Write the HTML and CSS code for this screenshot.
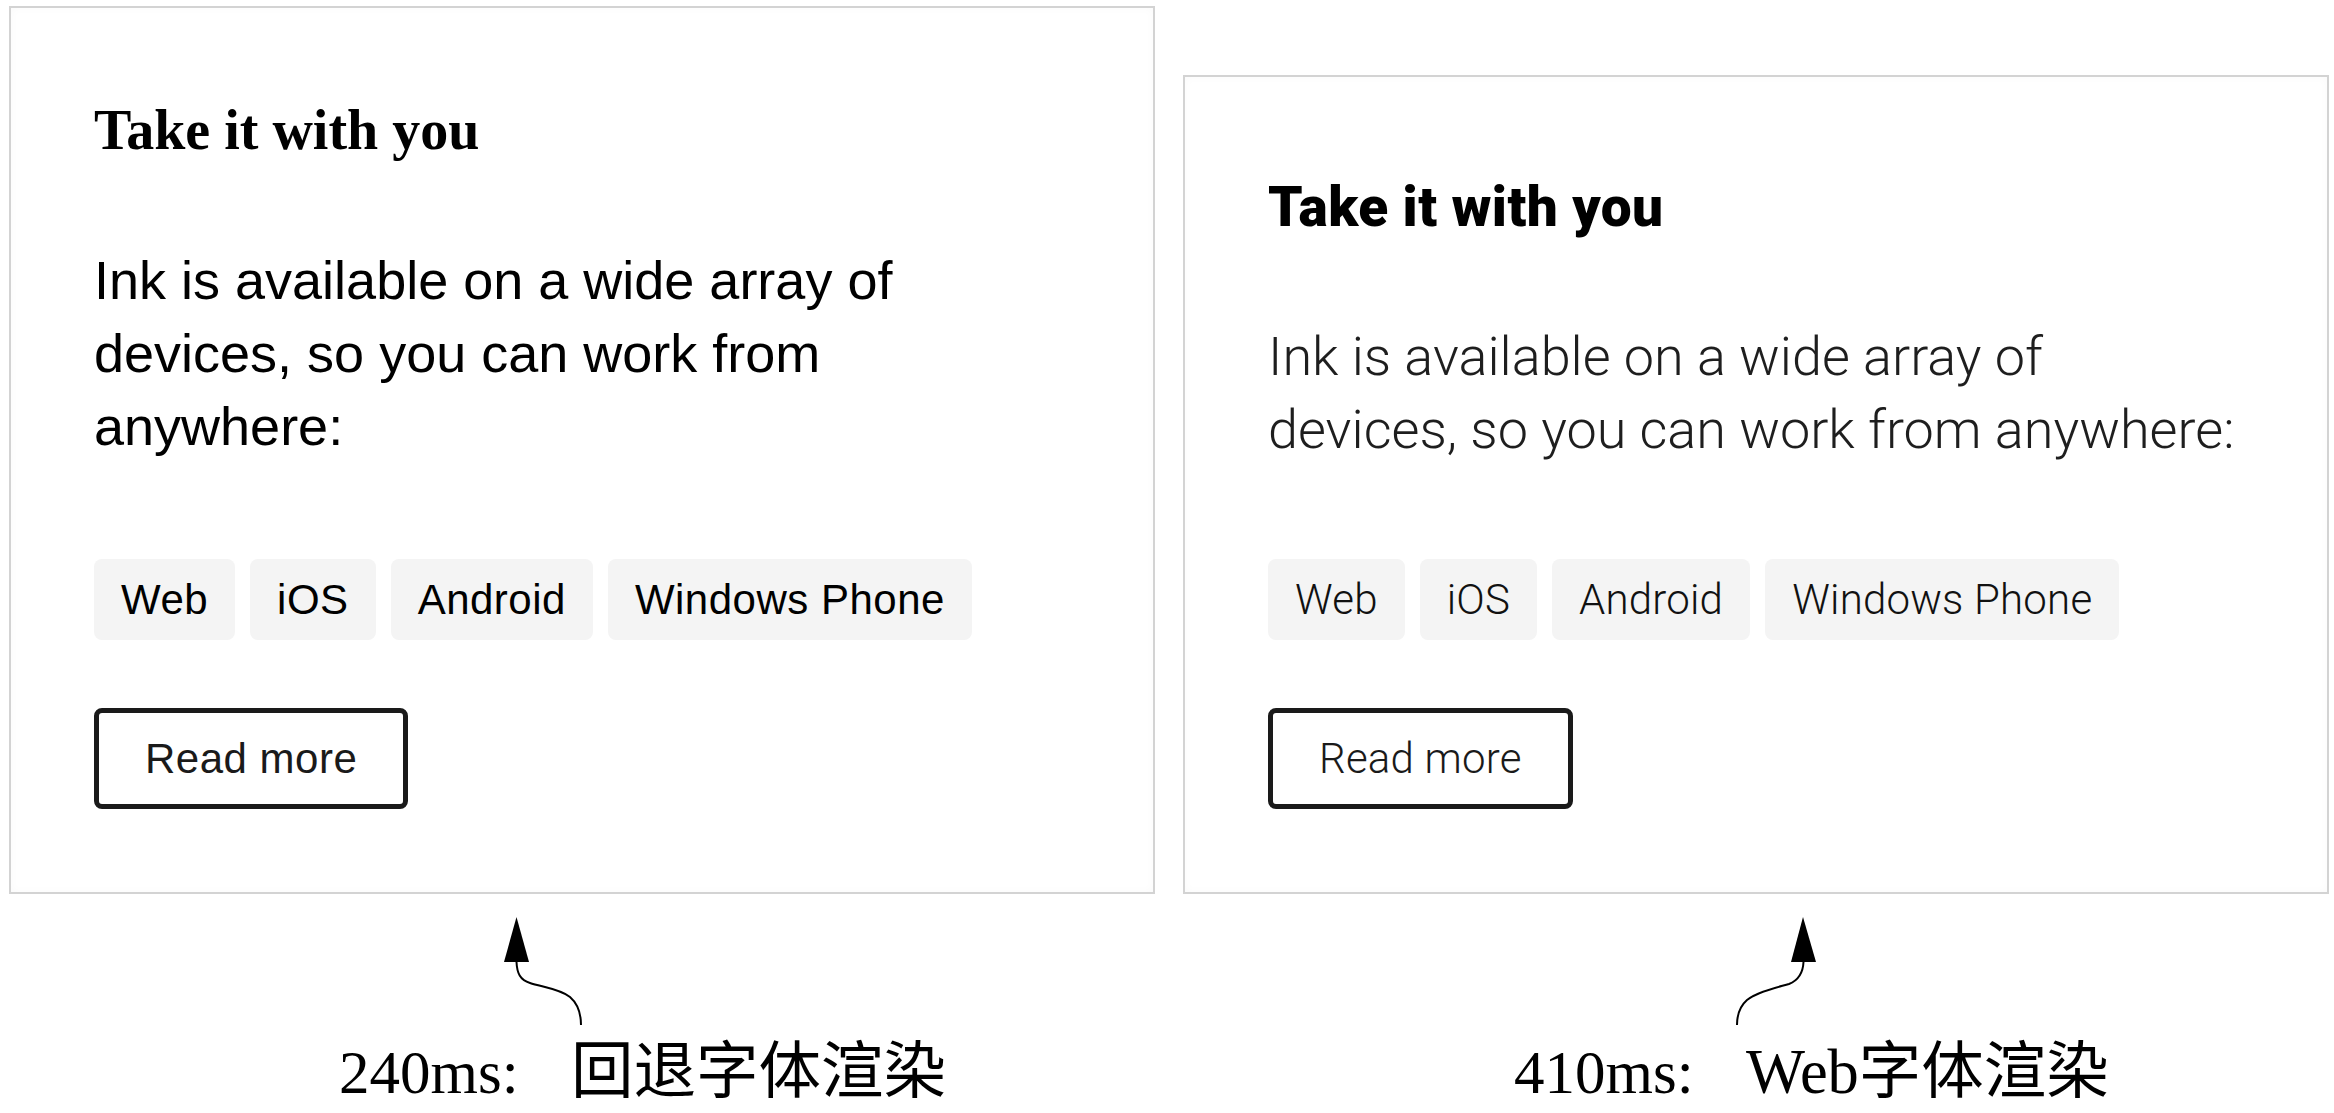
FILE: index.html
```html
<!DOCTYPE html>
<html lang="zh-CN">
<head>
<meta charset="utf-8">
<title>回退字体与Web字体渲染对比</title>
<link rel="stylesheet" href="styles.css">
</head>
<body>
<main class="figure">
  <div class="cards">
    <section class="card card--fallback">
      <h2 class="card-title">Take it with you</h2>
      <p class="card-text">Ink is available on a wide array of devices, so you can work from anywhere:</p>
      <ul class="tags">
        <li class="tag">Web</li>
        <li class="tag">iOS</li>
        <li class="tag">Android</li>
        <li class="tag">Windows Phone</li>
      </ul>
      <button class="btn" type="button">Read more</button>
    </section>
    <section class="card card--web">
      <h2 class="card-title">Take it with you</h2>
      <p class="card-text">Ink is available on a wide array of devices, so you can work from anywhere:</p>
      <ul class="tags">
        <li class="tag">Web</li>
        <li class="tag">iOS</li>
        <li class="tag">Android</li>
        <li class="tag">Windows Phone</li>
      </ul>
      <button class="btn" type="button">Read more</button>
    </section>
  </div>
  <div class="notes">
    <div class="note note--fallback">
      <svg class="arrow" width="100" height="120" viewBox="0 0 100 120" aria-hidden="true">
        <polygon points="16.5,7 4,52 29,52" fill="#000"/>
        <path d="M16.5 52 C17 63 20 70 30 73 C42 77 60 79 70 87 C78 94 81 104 81 115" fill="none" stroke="#000" stroke-width="2"/>
      </svg>
      <p class="note-label">240ms: <span class="note-zh">回退字体渲染</span></p>
    </div>
    <div class="note note--web">
      <svg class="arrow" width="100" height="120" viewBox="0 0 100 120" aria-hidden="true">
        <polygon points="78,7 66,52 91,52" fill="#000"/>
        <path d="M78.5 52 C78 63 74 70 64 74 C50 78 32 82 22 90 C14 97 12 105 12 115" fill="none" stroke="#000" stroke-width="2"/>
      </svg>
      <p class="note-label">410ms: <span class="note-zh">Web字体渲染</span></p>
    </div>
  </div>
</main>
</body>
</html>
```

FILE: styles.css
```css
* {
  box-sizing: border-box;
}

html,
body {
  margin: 0;
  padding: 0;
  background: #fff;
}

body {
  width: 2334px;
  height: 1113px;
  overflow: hidden;
}

.figure {
  padding-left: 9px;
}

.cards {
  display: flex;
  align-items: flex-end;
  gap: 28px;
  height: 894px;
}

.card {
  width: 1146px;
  border: 2px solid #d3d3d3;
  padding: 0 83px 83px;
  background: #fff;
  box-shadow: inset 0 0 10px rgba(0, 0, 0, 0.025);
}

.card--fallback {
  padding-top: 89px;
  font-family: "Liberation Sans", Arial, sans-serif;
  color: #000;
}

.card--web {
  padding-top: 97px;
  font-family: Roboto, "Noto Sans", sans-serif;
  color: #111;
}

.card-title {
  margin: 0;
  font-size: 56px;
  line-height: 66px;
  color: #000;
}

.card--fallback .card-title {
  font-family: "Liberation Serif", "Times New Roman", serif;
  font-weight: 700;
}

.card--web .card-title {
  font-family: Roboto, sans-serif;
  font-weight: 900;
  font-size: 55px;
  letter-spacing: 0.4px;
}

.card-text {
  margin: 81px 0 0;
  font-size: 54px;
  line-height: 73px;
}

.card--web .card-text {
  margin-top: 80px;
  font-weight: 300;
  color: #1e1e1e;
}

.tags {
  display: flex;
  gap: 15px;
  margin: 96px 0 0;
  padding: 0;
  list-style: none;
}

.card--web .tags {
  margin-top: 93px;
}

.tag {
  padding: 9px 27px;
  border-radius: 8px;
  background: #f4f4f4;
  font-size: 42px;
  line-height: 63px;
  letter-spacing: 0.5px;
}

.card--web .tag {
  font-weight: 300;
  letter-spacing: 0.2px;
}

.btn {
  display: block;
  margin-top: 68px;
  padding: 14px 46px;
  border: 5px solid #1a1a1a;
  border-radius: 8px;
  background: #fff;
  color: #1a1a1a;
  font-family: inherit;
  font-size: 42px;
  line-height: 63px;
  letter-spacing: 0.5px;
}

.card--web .btn {
  font-weight: 300;
  letter-spacing: 0.2px;
}

.notes {
  display: flex;
  gap: 28px;
}

.note {
  width: 1146px;
}

.arrow {
  display: block;
  margin-top: 16px;
}

.note--fallback .arrow {
  margin-left: 491px;
}

.note--web .arrow {
  margin-left: 542px;
}

.note-label {
  margin: 7px 0 0 330px;
  font-family: "Liberation Serif", "Noto Sans CJK SC", serif;
  font-size: 61px;
  line-height: 70px;
  color: #000;
  white-space: nowrap;
}

.note-zh {
  margin-left: 37px;
  font-size: 62.5px;
}

.note--web .note-label {
  margin-left: 331px;
}
```
